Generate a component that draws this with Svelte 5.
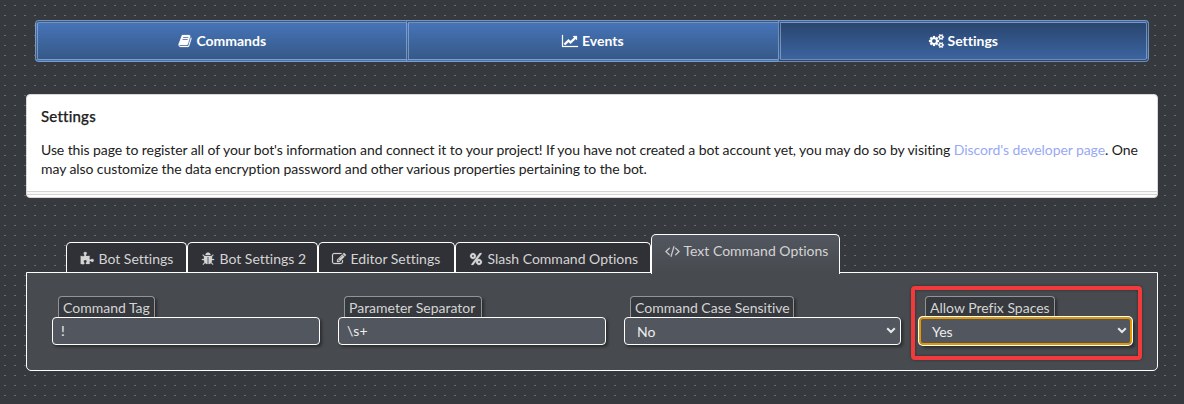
<script>
  const icons = {
    book: [1792, 'M1703 478q40 57 18 129l-275 906q-19 64-76.5 107.5t-122.5 43.5h-923q-77 0-148.5-53.5t-99.5-131.5q-24-67-2-127 0-4 3-27t4-37q1-8-3-21.5t-3-19.5q2-11 8-21t16.5-23.5 16.5-23.5q23-38 45-91.5t30-91.5q3-10 .5-30t-.5-28q3-11 17-28t17-23q21-36 42-92t25-90q1-9-2.5-32t.5-28q4-13 22-30.5t22-22.5q19-26 42.5-84.5t27.5-96.5q1-8-3-25.5t-2-26.5q2-8 9-18t18-23 17-21q8-12 16.5-30.5t15-35 16-36 19.5-32 26.5-23.5 36-11.5 47.5 5.5l-1 3q38-9 51-9h761q74 0 114 56t18 130l-274 906q-36 119-71.5 153.5t-128.5 34.5h-869q-27 0-38 15-11 16-1 43 24 70 144 70h923q29 0 56-15.5t35-41.5l300-987q7-22 5-57 38 15 59 43zm-1064 2q-4 13 2 22.5t20 9.5h608q13 0 25.5-9.5t16.5-22.5l21-64q4-13-2-22.5t-20-9.5h-608q-13 0-25.5 9.5t-16.5 22.5zm-83 256q-4 13 2 22.5t20 9.5h608q13 0 25.5-9.5t16.5-22.5l21-64q4-13-2-22.5t-20-9.5h-608q-13 0-25.5 9.5t-16.5 22.5z'],
    chart: [2048, 'M2048 1536v128h-2048v-1536h128v1408h1920zm-128-1248v435q0 21-19.5 29.5t-35.5-7.5l-121-121-633 633q-10 10-23 10t-23-10l-233-233-416 416-192-192 585-585q10-10 23-10t23 10l233 233 464-464-121-121q-16-16-7.5-35.5t29.5-19.5h435q14 0 23 9t9 23z'],
    cogs: [1920, 'M896 896q0-106-75-181t-181-75-181 75-75 181 75 181 181 75 181-75 75-181zm768 512q0-52-38-90t-90-38-90 38-38 90q0 53 37.5 90.5t90.5 37.5 90.5-37.5 37.5-90.5zm0-1024q0-52-38-90t-90-38-90 38-38 90q0 53 37.5 90.5t90.5 37.5 90.5-37.5 37.5-90.5zm-384 421v185q0 10-7 19.5t-16 10.5l-155 24q-11 35-32 76 34 48 90 115 7 11 7 20 0 12-7 19-23 30-82.5 89.5t-78.5 59.5q-11 0-21-7l-115-90q-37 19-77 31-11 108-23 155-7 24-30 24h-186q-11 0-20-7.5t-10-17.5l-23-153q-34-10-75-31l-118 89q-7 7-20 7-11 0-21-8-144-133-144-160 0-9 7-19 10-14 41-53t47-61q-23-44-35-82l-152-24q-10-1-17-9.5t-7-19.5v-185q0-10 7-19.5t16-10.5l155-24q11-35 32-76-34-48-90-115-7-11-7-20 0-12 7-20 22-30 82-89t79-59q11 0 21 7l115 90q34-18 77-32 11-108 23-154 7-24 30-24h186q11 0 20 7.5t10 17.5l23 153q34 10 75 31l118-89q8-7 20-7 11 0 21 8 144 133 144 160 0 8-7 19-12 16-42 54t-45 60q23 48 34 82l152 23q10 2 17 10.5t7 19.5zm640 533v140q0 16-149 31-12 27-30 52 51 113 51 138 0 4-4 7-122 71-124 71-8 0-46-47t-52-68q-20 2-30 2t-30-2q-14 21-52 68t-46 47q-2 0-124-71-4-3-4-7 0-25 51-138-18-25-30-52-149-15-149-31v-140q0-16 149-31 13-29 30-52-51-113-51-138 0-4 4-7 4-2 35-20t59-34 30-16q8 0 46 46.5t52 67.5q20-2 30-2t30 2q51-71 92-112l6-2q4 0 124 70 4 3 4 7 0 25-51 138 17 23 30 52 149 15 149 31zm0-1024v140q0 16-149 31-12 27-30 52 51 113 51 138 0 4-4 7-122 71-124 71-8 0-46-47t-52-68q-20 2-30 2t-30-2q-14 21-52 68t-46 47q-2 0-124-71-4-3-4-7 0-25 51-138-18-25-30-52-149-15-149-31v-140q0-16 149-31 13-29 30-52-51-113-51-138 0-4 4-7 4-2 35-20t59-34 30-16q8 0 46 46.5t52 67.5q20-2 30-2t30 2q51-71 92-112l6-2q4 0 124 70 4 3 4 7 0 25-51 138 17 23 30 52 149 15 149 31z'],
    puzzle: [1792, 'M1755 1083q0 81-44.5 135t-123.5 54q-41 0-77.5-17.5t-59-38-56.5-38-71-17.5q-110 0-110 124 0 39 16 115t15 115v5q-22 0-33 1-34 3-97.5 11.5t-115.5 13.5-98 5q-61 0-103-26.5t-42-83.5q0-37 17.5-71t38-56.5 38-59 17.5-77.5q0-79-54-123.5t-135-44.5q-84 0-143 45.5t-59 127.5q0 43 15 83t33.5 64.5 33.5 53 15 50.5q0 45-46 89-37 35-117 35-95 0-245-24-9-2-27.5-4t-27.5-4l-13-2q-1 0-3-1-2 0-2-1v-1024q2 1 17.5 3.5t34 5 21.5 3.5q150 24 245 24 80 0 117-35 46-44 46-89 0-22-15-50.5t-33.5-53-33.5-64.5-15-83q0-82 59-127.5t144-45.5q80 0 134 44.5t54 123.5q0 41-17.5 77.5t-38 59-38 56.5-17.5 71q0 57 42 83.5t103 26.5q64 0 180-15t163-17v2q-1 2-3.5 17.5t-5 34-3.5 21.5q-24 150-24 245 0 80 35 117 44 46 89 46 22 0 50.5-15t53-33.5 64.5-33.5 83-15q82 0 127.5 59t45.5 143z'],
    bug: [1792, 'M1696 960q0 26-19 45t-45 19h-224q0 171-67 290l208 209q19 19 19 45t-19 45q-18 19-45 19t-45-19l-198-197q-5 5-15 13t-42 28.5-65 36.5-82 29-97 13v-896h-128v896q-51 0-101.5-13.5t-87-33-66-39-43.5-32.5l-15-14-183 207q-20 21-48 21-24 0-43-16-19-18-20.5-44.5t15.5-46.5l202-227q-58-114-58-274h-224q-26 0-45-19t-19-45 19-45 45-19h224v-294l-173-173q-19-19-19-45t19-45 45-19 45 19l173 173h844l173-173q19-19 45-19t45 19 19 45-19 45l-173 173v294h224q26 0 45 19t19 45zm-480-576h-640q0-133 93.5-226.5t226.5-93.5 226.5 93.5 93.5 226.5z'],
    edit: [1792, 'M888 1184l116-116-152-152-116 116v56h96v96h56zm440-720q-16-16-33 1l-350 350q-17 17-1 33t33-1l350-350q17-17 1-33zm80 594v190q0 119-84.5 203.5t-203.5 84.5h-832q-119 0-203.5-84.5t-84.5-203.5v-832q0-119 84.5-203.5t203.5-84.5h832q63 0 117 25 15 7 18 23 3 17-9 29l-49 49q-14 14-32 8-23-6-45-6h-832q-66 0-113 47t-47 113v832q0 66 47 113t113 47h832q66 0 113-47t47-113v-126q0-13 9-22l64-64q15-15 35-7t20 29zm-96-738l288 288-672 672h-288v-288zm444 132l-92 92-288-288 92-92q28-28 68-28t68 28l152 152q28 28 28 68t-28 68z'],
    percent: [1792, 'M1408 1280q0-52-38-90t-90-38-90 38-38 90 38 90 90 38 90-38 38-90zm-768-768q0-52-38-90t-90-38-90 38-38 90 38 90 90 38 90-38 38-90zm1024 768q0 159-112.5 271.5t-271.5 112.5-271.5-112.5-112.5-271.5 112.5-271.5 271.5-112.5 271.5 112.5 112.5 271.5zm-32-1088q0 20-13 38l-1056 1408q-19 26-51 26h-160q-26 0-45-19t-19-45q0-20 13-38l1056-1408q19-26 51-26h160q26 0 45 19t19 45zm-736 320q0 159-112.5 271.5t-271.5 112.5-271.5-112.5-112.5-271.5 112.5-271.5 271.5-112.5 271.5 112.5 112.5 271.5z'],
    code: [1920, 'M617 1399l-50 50q-10 10-23 10t-23-10l-466-466q-10-10-10-23t10-23l466-466q10-10 23-10t23 10l50 50q10 10 10 23t-10 23l-393 393 393 393q10 10 10 23t-10 23zm591-1067l-373 1291q-4 13-15.5 19.5t-23.5 2.5l-62-17q-13-4-19.5-15.5t-2.5-24.5l373-1291q4-13 15.5-19.5t23.5-2.5l62 17q13 4 19.5 15.5t2.5 24.5zm657 651l-466 466q-10 10-23 10t-23-10l-50-50q-10-10-10-23t10-23l393-393-393-393q-10-10-10-23t10-23l50-50q10-10 23-10t23 10l466 466q10 10 10 23t-10 23z']
  };

  const pages = [
    { label: 'Commands', icon: 'book' },
    { label: 'Events', icon: 'chart' },
    { label: 'Settings', icon: 'cogs', active: true }
  ];

  const tabs = [
    { label: 'Bot Settings', icon: 'puzzle', width: 121 },
    { label: 'Bot Settings 2', icon: 'bug', width: 131 },
    { label: 'Editor Settings', icon: 'edit', width: 137 },
    { label: 'Slash Command Options', icon: 'percent', width: 196 },
    { label: 'Text Command Options', icon: 'code', width: 189, active: true }
  ];

  const fields = [
    { label: 'Command Tag', value: '!', width: 268, labelWidth: 97 },
    { label: 'Parameter Separator', value: '\\s+', width: 268, labelWidth: 138 },
    { label: 'Command Case Sensitive', value: 'No', width: 277, labelWidth: 164, select: true },
    { label: 'Allow Prefix Spaces', value: 'Yes', width: 213, labelWidth: 130, select: true, focused: true }
  ];
</script>

{#snippet icon(name)}
  <svg class="icon" width={(icons[name][0] / 1792) * 14} height="14" viewBox="0 0 {icons[name][0]} 1792" aria-hidden="true">
    <path d={icons[name][1]} />
  </svg>
{/snippet}

<main>
  <nav class="pages">
    {#each pages as page}
      <a class="page" class:active={page.active}>
        <span class="slot">{@render icon(page.icon)}</span>{page.label}
      </a>
    {/each}
  </nav>

  <section class="intro">
    <h1>Settings</h1>
    <p>
      Use this page to register all of your bot's information and connect it to your project! If you have not created a bot account yet, you may do so by visiting <span class="link">Discord's developer page</span>. One may also customize the data encryption password and other various properties pertaining to the bot.
    </p>
    <div class="stack"></div>
  </section>

  <div class="tabs">
    {#each tabs as tab}
      <div class="tab" class:active={tab.active} style="width: {tab.width}px">
        <span class="slot">{@render icon(tab.icon)}</span>{tab.label}
      </div>
    {/each}
  </div>

  <section class="panel">
    {#each fields as field}
      <div class="field" class:focused={field.focused} style="width: {field.width}px">
        <span class="label" style="width: {field.labelWidth}px">{field.label}</span>
        <div class="control" class:select={field.select}>
          <span>{field.value}</span>
          {#if field.select}
            <svg width="10" height="7" viewBox="0 0 10 7" aria-hidden="true">
              <path d="M1.2 1.2 5 5l3.8-3.8" fill="none" stroke="#e8e8e8" stroke-width="2" />
            </svg>
          {/if}
        </div>
        {#if field.focused}<div class="marker"></div>{/if}
      </div>
    {/each}
  </section>
</main>

<style>
  :global(body) { background: #36393e; }
  main {
    box-sizing: border-box;
    height: 404px;
    padding: 20px 26px 0;
    overflow: hidden;
    font: 14px/19px Lato, sans-serif;
    font-variant-ligatures: none;
    color: #d4d4d4;
    background: #36393e url("data:image/svg+xml,%3Csvg xmlns='http://www.w3.org/2000/svg' width='10' height='10'%3E%3Crect x='4' y='5' width='2' height='1' fill='%236a6c70'/%3E%3C/svg%3E");
  }
  .icon { display: block; flex: none; overflow: visible; fill: currentColor; stroke: currentColor; stroke-width: 30px; }
  .slot { display: flex; justify-content: center; width: 16px; margin-right: 3.5px; }

  .pages { display: grid; grid-template-columns: 371px 372px 371px; height: 42px; margin: 0 9px; }
  .page {
    box-sizing: border-box;
    display: flex;
    align-items: center;
    justify-content: center;
    padding: 0 1px 1px 0;
    border: 3px double rgba(170, 195, 225, 0.55);
    border-right-width: 0;
    background: linear-gradient(#4674b8, #365987);
    color: #fff;
    font-weight: 700;
  }
  .page:first-child { border-radius: 4px 0 0 4px; }
  .page:last-child { border-right-width: 3px; border-radius: 0 4px 4px 0; }
  .page.active { background: linear-gradient(#29456f, #3c649f); }

  .intro {
    box-sizing: border-box;
    height: 104px;
    margin-top: 32px;
    padding: 12px 14px 0;
    display: flex;
    flex-direction: column;
    border: 1px solid #d8d8d9;
    border-radius: 4px;
    background: #fff;
    color: #212121;
  }
  h1 { margin: 0; font-size: 15px; line-height: 19px; font-weight: 500; letter-spacing: 0.2px; -webkit-text-stroke: 0.25px #212121; }
  p { margin: 14px 0 0; letter-spacing: -0.085px; }
  .link { color: #98a9f6; }
  .stack { height: 2px; margin: auto -14px 2px; border: solid #d4d4d5; border-width: 1px 0; background: #f8f8f8; }

  .tabs { display: flex; align-items: flex-end; height: 40px; margin: 36px 40px -2px; position: relative; z-index: 1; }
  .tab {
    box-sizing: border-box;
    display: flex;
    align-items: center;
    flex: none;
    height: 30px;
    margin-bottom: 2px;
    padding: 2px 0 0 12px;
    border: 1px solid #fff;
    border-bottom: 0;
    border-radius: 5px 5px 0 0;
    background: #303136;
    white-space: nowrap;
  }
  .tab.active {
    height: 40px;
    margin-bottom: 0;
    padding: 0 0 8px 12px;
    background: linear-gradient(#52565f, #474a4e);
  }

  .panel {
    box-sizing: border-box;
    height: 99px;
    display: flex;
    gap: 18px;
    padding: 23px 25px 0;
    border: 1px solid #fff;
    border-radius: 0 0 5px 5px;
    background: #474a4e;
  }
  .field { position: relative; flex: none; }
  .label {
    box-sizing: border-box;
    display: block;
    height: 21px;
    margin-left: 6px;
    padding: 1px 0 0 4px;
    border: 1px solid #929497;
    border-bottom: 0;
    border-radius: 4px 4px 0 0;
    background: #36393e;
    box-shadow: 2px 2px 3px rgba(0, 0, 0, 0.4);
    white-space: nowrap;
  }
  .control {
    position: relative;
    box-sizing: border-box;
    display: flex;
    align-items: center;
    justify-content: space-between;
    height: 28px;
    padding: 0 4px 2px 8px;
    border: 1px solid #fff;
    border-radius: 4px;
    background: #52565e;
    box-shadow: 2px 2px 3px rgba(0, 0, 0, 0.4);
    color: #eee;
  }
  .control.select { padding: 0 4px 0 12px; }
  .control.select svg { margin-top: -1px; }
  .focused .control { border-color: #e59700; box-shadow: inset 0 0 0 1px #e59700, 0 0 0 1px #fff, 3px 3px 3px rgba(0, 0, 0, 0.4); }
  .marker {
    position: absolute;
    inset: -10px -10px auto -8px;
    height: 66px;
    border: 4px solid #f03a3c;
    border-radius: 4px;
    box-shadow: 0 0 3px rgba(0, 0, 0, 0.4), inset 0 0 3px rgba(0, 0, 0, 0.4);
  }
</style>
